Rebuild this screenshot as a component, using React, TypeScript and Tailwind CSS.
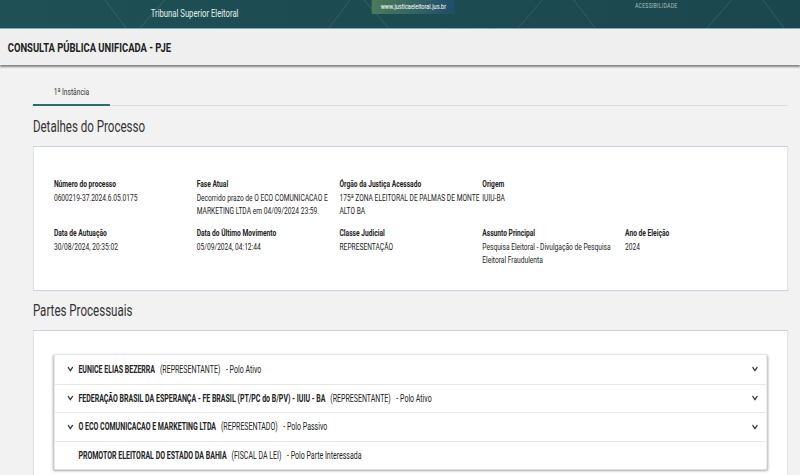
import React from "react";

type Field = { label: string; value: string };

const rowOne: Field[] = [
  { label: "Número do processo", value: "0600219-37.2024.6.05.0175" },
  {
    label: "Fase Atual",
    value: "Decorrido prazo de O ECO COMUNICACAO E MARKETING LTDA em 04/09/2024 23:59.",
  },
  { label: "Órgão da Justiça Acessado", value: "175ª ZONA ELEITORAL DE PALMAS DE MONTE ALTO BA" },
  { label: "Origem", value: "IUIU-BA" },
];

const rowTwo: Field[] = [
  { label: "Data de Autuação", value: "30/08/2024, 20:35:02" },
  { label: "Data do Último Movimento", value: "05/09/2024, 04:12:44" },
  { label: "Classe Judicial", value: "REPRESENTAÇÃO" },
  { label: "Assunto Principal", value: "Pesquisa Eleitoral - Divulgação de Pesquisa Eleitoral Fraudulenta" },
  { label: "Ano de Eleição", value: "2024" },
];

type Parte = { nome: string; papel: string; polo: string; expand: boolean };

const partes: Parte[] = [
  { nome: "EUNICE ELIAS BEZERRA", papel: "(REPRESENTANTE)", polo: "- Polo Ativo", expand: true },
  {
    nome: "FEDERAÇÃO BRASIL DA ESPERANÇA - FE BRASIL (PT/PC do B/PV) - IUIU - BA",
    papel: "(REPRESENTANTE)",
    polo: "- Polo Ativo",
    expand: true,
  },
  { nome: "O ECO COMUNICACAO E MARKETING LTDA", papel: "(REPRESENTADO)", polo: "- Polo Passivo", expand: true },
  { nome: "PROMOTOR ELEITORAL DO ESTADO DA BAHIA", papel: "(FISCAL DA LEI)", polo: "- Polo Parte Interessada", expand: false },
];

function Chevron() {
  return (
    <svg width="9" height="6" viewBox="0 0 9 6" className="shrink-0">
      <polyline points="1,1 4.5,4.5 8,1" fill="none" stroke="#333" strokeWidth="1.6" />
    </svg>
  );
}

function FieldBlock({ f }: { f: Field }) {
  return (
    <div className="text-[9.5px] leading-[13px] text-[#222]">
      <div className="font-bold">{f.label}</div>
      <div className="mt-[1px]">{f.value}</div>
    </div>
  );
}

export default function App() {
  return (
    <div className="h-[475px] w-full overflow-hidden bg-[#f2f2f2]">
      <div className="w-[1143px] origin-top-left scale-x-[0.7] font-['Roboto',sans-serif]">
        {/* barra do TSE */}
        <div className="relative h-[29px] border-b border-[#7fb0b3] bg-gradient-to-r from-[#1e5056] to-[#1a474d]">
          <svg className="absolute inset-0 h-full w-full" viewBox="0 0 1143 28" preserveAspectRatio="none">
            <g stroke="#ffffff" strokeOpacity="0.09" strokeWidth="1.2">
              <line x1="150" y1="0" x2="180" y2="28" />
              <line x1="200" y1="28" x2="235" y2="0" />
              <line x1="470" y1="28" x2="500" y2="0" />
              <line x1="520" y1="0" x2="555" y2="28" />
              <line x1="740" y1="28" x2="775" y2="0" />
              <line x1="820" y1="0" x2="850" y2="28" />
              <line x1="1010" y1="28" x2="1045" y2="0" />
              <line x1="1090" y1="0" x2="1120" y2="28" />
            </g>
          </svg>
          <div className="relative flex items-start">
            <div className="ml-[208px] mt-[8px] w-[140px] text-center text-[11px] leading-[12px] text-[#e6eeee]">
              Tribunal Superior Eleitoral
            </div>
            <div className="ml-[183px] flex h-[14px] w-[119px] items-center justify-center bg-gradient-to-r from-[#4c7b56] to-[#1f4d6c] text-[8px] text-white">
              www.justicaeleitoral.jus.br
            </div>
            <div className="ml-[257px] mt-[1px] text-[7.5px] leading-[9px] tracking-[0.3px] text-[#a9bfbf]">
              ACESSIBILIDADE
            </div>
          </div>
        </div>

        {/* titulo */}
        <div className="flex h-[36px] items-center bg-[#efefef] pl-[11px] shadow-[0_2px_2px_rgba(0,0,0,0.45)]">
          <h1 className="text-[13.5px] font-bold text-[#222]">CONSULTA PÚBLICA UNIFICADA - PJE</h1>
        </div>

        <div className="pl-[47px] pr-[17px]">
          {/* abas */}
          <div className="mt-[15px] flex border-b border-[#dcdcdc]">
            <div className="-mb-px flex h-[26px] w-[110px] items-center justify-center border-b-2 border-[#2b6d69] text-[9.5px] text-[#333]">
              1ª Instância
            </div>
          </div>

          <h2 className="mt-[11px] text-[16.5px] leading-[20px] text-[#333]">Detalhes do Processo</h2>

          <div className="mt-[9px] border border-[#c8d3dd] bg-white pb-[24px] pl-[29px] pt-[30px]">
            <div className="grid grid-cols-[repeat(5,204px)] gap-y-[9px]">
              {rowOne.map((f) => (
                <FieldBlock key={f.label} f={f} />
              ))}
              <div />
              {rowTwo.map((f) => (
                <FieldBlock key={f.label} f={f} />
              ))}
            </div>
          </div>

          <h2 className="mt-[10px] text-[16.5px] leading-[20px] text-[#333]">Partes Processuais</h2>

          <div className="mt-[9px] border border-[#c8d3dd] bg-white px-[29px] pb-[24px] pt-[23px]">
            <div className="rounded-[2px] border border-[#e4e4e4] bg-white shadow-[0_1px_3px_rgba(0,0,0,0.35)]">
              {partes.map((p, i) => (
                <div
                  key={p.nome}
                  className={`flex h-[28.5px] items-center pl-[18px] pr-[12px] text-[10px] text-[#222] ${
                    i > 0 ? "border-t border-[#e8e8e8]" : ""
                  }`}
                >
                  {p.expand ? <Chevron /> : <div className="w-[9px]" />}
                  <span className="ml-[7px] font-bold">{p.nome}</span>
                  <span className="ml-[7px]">{p.papel}</span>
                  <span className="ml-[8px]">{p.polo}</span>
                  {p.expand && (
                    <div className="ml-auto">
                      <Chevron />
                    </div>
                  )}
                </div>
              ))}
            </div>
          </div>
        </div>
      </div>
    </div>
  );
}
